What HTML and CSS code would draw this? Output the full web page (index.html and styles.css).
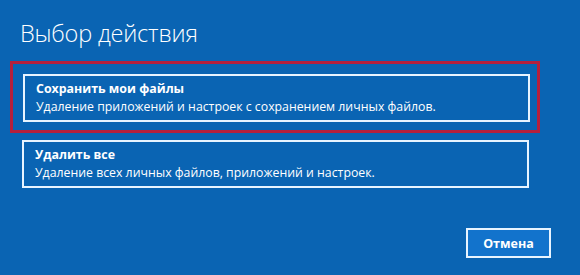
FILE: index.html
```html
<!DOCTYPE html>
<html lang="ru">
<head>
<meta charset="utf-8">
<link rel="stylesheet" href="styles.css">
</head>
<body>
<div class="screen">
  <h1 class="title">Выбор действия</h1>
  <div class="highlight">
    <div class="option">
      <div class="option-name">Сохранить мои файлы</div>
      <div class="option-desc">Удаление приложений и настроек с сохранением личных файлов.</div>
    </div>
  </div>
  <div class="option option-plain">
    <div class="option-name">Удалить все</div>
    <div class="option-desc">Удаление всех личных файлов, приложений и настроек.</div>
  </div>
  <div class="footer">
    <button class="cancel">Отмена</button>
  </div>
</div>
</body>
</html>
```
FILE: styles.css
```css
html, body {
  margin: 0;
  padding: 0;
}
body {
  width: 580px;
  height: 275px;
  background: #0a64b3;
  font-family: "Open Sans", "Noto Sans", sans-serif;
  color: #ffffff;
  overflow: hidden;
}
.screen {
  display: flex;
  flex-direction: column;
  height: 275px;
  box-sizing: border-box;
  padding-top: 17px;
}
.title {
  margin: 0 0 0 20px;
  font-size: 23.5px;
  font-weight: 300;
  line-height: 32px;
  letter-spacing: -0.2px;
}
.highlight {
  margin: 12px 0 0 10px;
  width: 530px;
  box-sizing: border-box;
  border: 3px solid #b5203d;
  padding: 10px 9px 8px 10px;
}
.option {
  width: 507px;
  box-sizing: border-box;
  border: 2px solid #e8f4ff;
  padding: 4px 11px 5px 11px;
}
.option-plain {
  margin: 7px 0 0 22px;
}
.option-name {
  font-size: 12.4px;
  font-weight: 700;
  line-height: 17px;
}
.option-desc {
  font-size: 12.3px;
  line-height: 17px;
  margin-top: 1px;
}
.footer {
  display: flex;
  justify-content: flex-end;
  padding: 40px 29px 0 0;
}
.cancel {
  width: 85px;
  height: 30px;
  box-sizing: border-box;
  border: 2px solid #e8f4ff;
  background: #1273cc;
  color: #ffffff;
  font-family: "Open Sans", "Noto Sans", sans-serif;
  font-size: 12.5px;
  font-weight: 700;
  padding: 0;
}
```
